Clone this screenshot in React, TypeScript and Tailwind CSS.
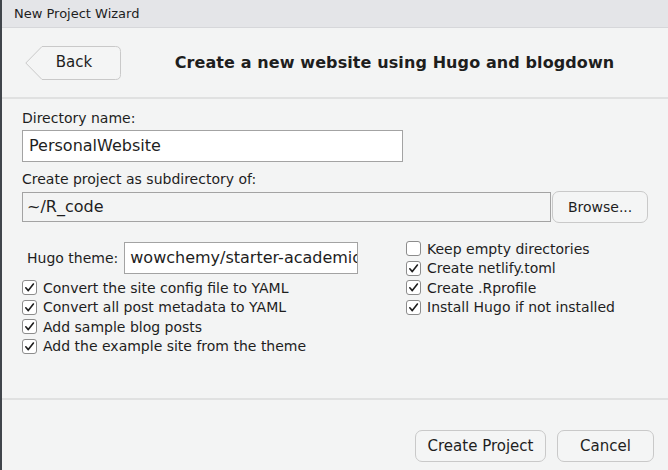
import React from "react";

const font = { fontFamily: '"DejaVu Sans", Verdana, sans-serif' };

function Check({ checked, label }: { checked: boolean; label: string }) {
  return (
    <div className="flex h-[19.5px] items-center gap-[6px]">
      <span className="flex h-[15px] w-[15px] items-center justify-center rounded-[3px] border border-[#8c8c8c] bg-white">
        {checked && (
          <svg width="11" height="11" viewBox="0 0 11 11">
            <path d="M1.8 5.8 L4.3 8.6 L9.4 2" fill="none" stroke="#1d1d1d" strokeWidth="1.6" strokeLinecap="round" strokeLinejoin="round" />
          </svg>
        )}
      </span>
      <span className="text-[14px] leading-none text-[#1e1e1e]">{label}</span>
    </div>
  );
}

function BackButton() {
  return (
    <button className="relative h-[34px] w-[96px] text-[15px] text-[#1e1e1e]">
      <svg className="absolute inset-0" width="96" height="34" viewBox="0 0 96 34">
        <path
          d="M0.8 17 L17 0.5 H90.5 Q95.5 0.5 95.5 5.5 V28.5 Q95.5 33.5 90.5 33.5 H17 Z"
          fill="#f4f5f5"
          stroke="#c9c9c9"
          strokeWidth="1"
        />
      </svg>
      <span className="relative ml-[2px]">Back</span>
    </button>
  );
}

export default function App() {
  return (
    <div style={font} className="flex h-[470px] w-[668px] flex-col overflow-hidden border-l-2 border-[#40454b] bg-[#f3f4f4] text-[#1e1e1e]">
      <div className="flex h-[28px] shrink-0 items-center border-b border-[#d6d7da] bg-[#e4e5e8] pl-[12px] text-[13px]">
        New Project Wizard
      </div>

      <div className="flex h-[71px] shrink-0 items-center border-b-2 border-[#e0e1e1] pl-[23px]">
        <BackButton />
        <div className="flex-1 text-center text-[16px] font-bold tracking-[0.1px]">
          Create a new website using Hugo and blogdown
        </div>
      </div>

      <div className="flex-1 px-[20px] pt-[9px]">
        <div className="h-[22px] text-[14px] leading-[20px]">Directory name:</div>
        <div className="flex h-[32px] w-[381px] items-center border border-[#a3a3a3] bg-white px-[6px] text-[16px]">
          PersonalWebsite
        </div>
        <div className="mt-[7px] h-[22px] text-[14px] leading-[20px]">Create project as subdirectory of:</div>
        <div className="flex items-center">
          <div className="flex h-[30px] w-[530px] items-center border border-[#a3a3a3] px-[4px] text-[16px]">
            ~/R_code
          </div>
          <button className="ml-[1px] h-[32px] w-[96px] rounded-[7px] border border-[#c9c9c9] bg-[#f4f5f5] text-[14px]">
            Browse...
          </button>
        </div>

        <div className="mt-[19px] flex">
          <div className="w-[384px]">
            <div className="mb-[4px] flex items-center">
              <span className="ml-[5px] mr-[6px] text-[14px]">Hugo theme:</span>
              <div className="flex h-[32px] w-[234px] items-center overflow-hidden whitespace-nowrap border border-[#a3a3a3] bg-white px-[5px] text-[16px]">
                wowchemy/starter-academic
              </div>
            </div>
            <Check checked label="Convert the site config file to YAML" />
            <Check checked label="Convert all post metadata to YAML" />
            <Check checked label="Add sample blog posts" />
            <Check checked label="Add the example site from the theme" />
          </div>
          <div className="-mt-[3px]">
            <Check checked={false} label="Keep empty directories" />
            <Check checked label="Create netlify.toml" />
            <Check checked label="Create .Rprofile" />
            <Check checked label="Install Hugo if not installed" />
          </div>
        </div>
      </div>

      <div className="flex h-[72px] shrink-0 items-start justify-end gap-[11px] border-t-2 border-[#e0e1e1] pr-[14px] pt-[30px]">
        <button className="h-[32px] w-[131px] rounded-[7px] border border-[#c9c9c9] bg-[#f4f5f5] text-[15px]">
          Create Project
        </button>
        <button className="h-[32px] w-[97px] rounded-[7px] border border-[#c9c9c9] bg-[#f4f5f5] text-[15px]">
          Cancel
        </button>
      </div>
    </div>
  );
}
